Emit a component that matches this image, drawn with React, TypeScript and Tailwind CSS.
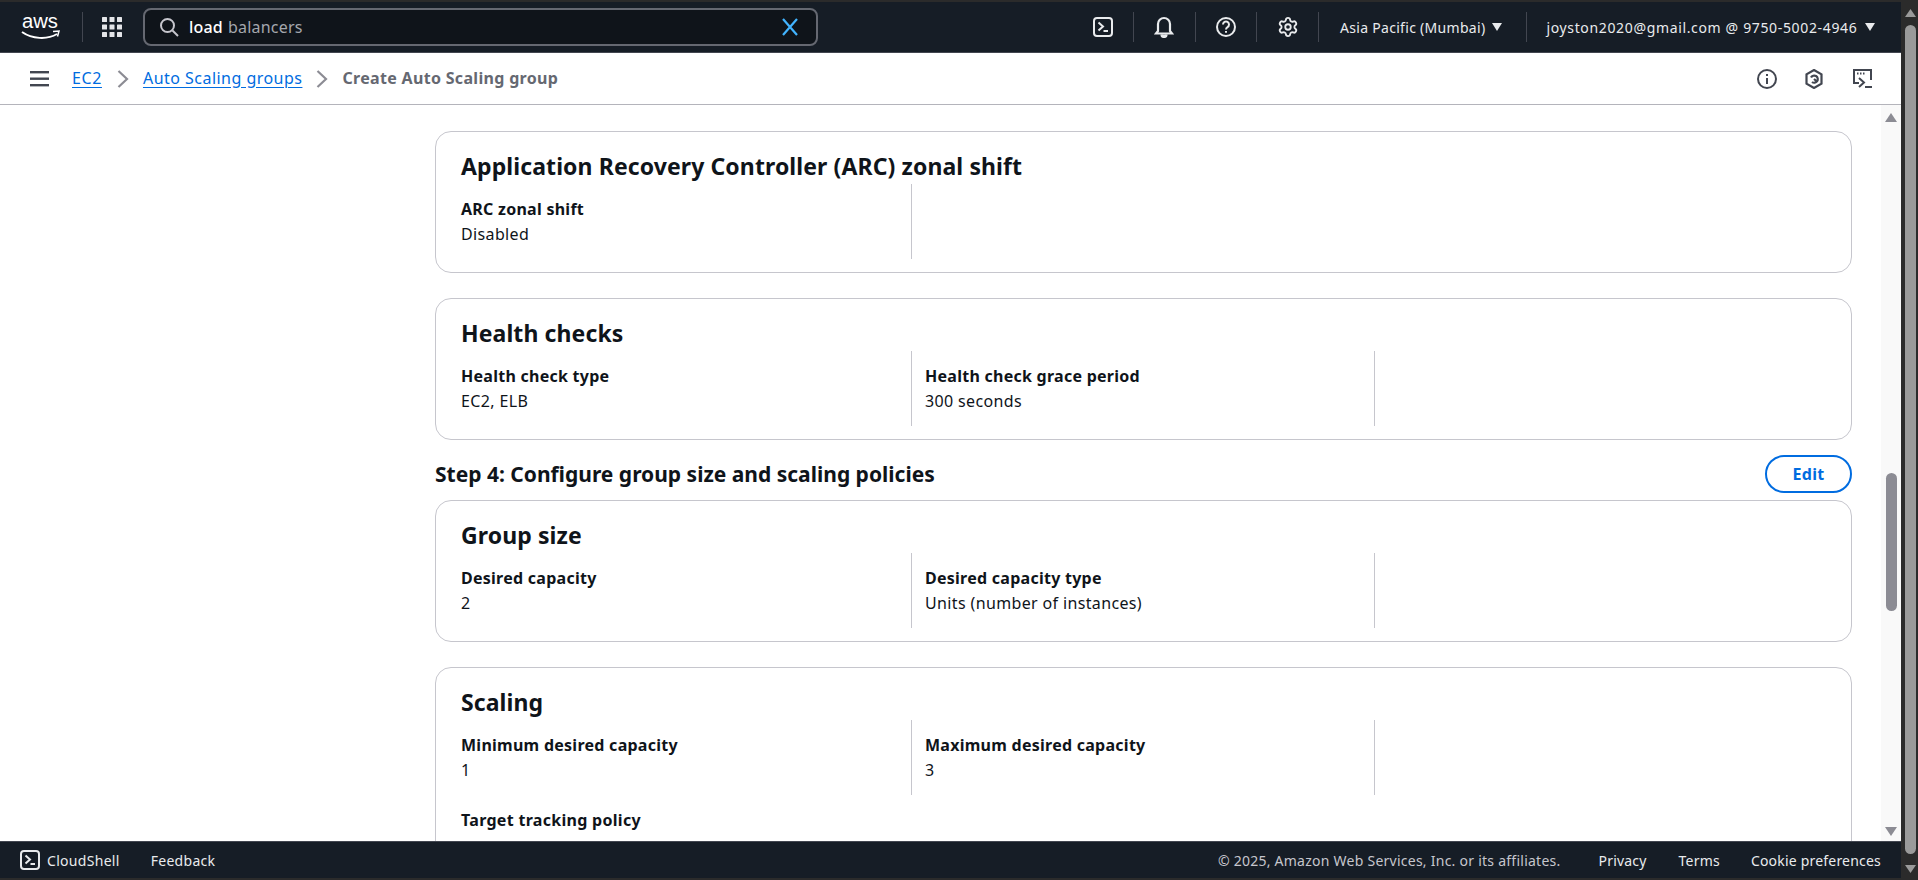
import React from "react";
import { Settings } from "lucide-react";

const font = "font-['Noto_Sans',sans-serif]";

function Field({ label, value, width, divider = true }: { label: string; value: string; width: string; divider?: boolean }) {
  return (
    <div className={`h-[75px] pt-[13px] ${width} ${divider ? "border-r border-[#c6c6cd]" : ""}`}>
      <div className="text-[16px] tracking-[0.26px] leading-[25px] font-bold text-[#0f141a]">{label}</div>
      <div className="text-[16px] tracking-[0.36px] leading-[25px] text-[#0f141a]">{value}</div>
    </div>
  );
}

function FieldGrid({ children }: { children: React.ReactNode }) {
  return <div className="flex">{children}</div>;
}

function Card({ title, className = "", children }: { title: string; className?: string; children: React.ReactNode }) {
  return (
    <section className={`w-[1417px] border border-[#c6c6cd] rounded-[16px] pl-[25px] bg-white ${className}`}>
      <h2 className="text-[23px] tracking-[0.1px] leading-[35px] font-bold text-[#0f141a] pt-[17px] box-content">{title}</h2>
      {children}
    </section>
  );
}

function Caret({ className = "" }: { className?: string }) {
  return (
    <svg width="10" height="8" viewBox="0 0 10 8" className={className}>
      <path d="M0 0h10L5 8z" fill="currentColor" />
    </svg>
  );
}

function Chevron() {
  return (
    <svg width="12" height="18" viewBox="0 0 12 18" fill="none" stroke="#8c8c94" strokeWidth="2.2">
      <path d="M1.5 1l8.5 8-8.5 8" />
    </svg>
  );
}

function ShellIcon({ size = 20 }: { size?: number }) {
  return (
    <svg width={size} height={size} viewBox="0 0 20 20" fill="none" stroke="currentColor" strokeWidth="2">
      <rect x="1" y="1" width="18" height="18" rx="3" />
      <path d="M5.5 5.5L10 9.5l-4.5 4M10.5 14H15" />
    </svg>
  );
}

function NavDivider() {
  return <div className="w-px h-[30px] bg-[#424650]" />;
}

export default function App() {
  return (
    <div className={`w-[1918px] h-[880px] overflow-hidden flex bg-[#2b2b2b] ${font}`}>
      <div className="w-[1901px] h-[880px] flex flex-col">
        <div className="h-[2px] bg-[#2b2b2b] shrink-0" />
        <header className="h-[51px] bg-[#161d26] border-b border-[#424650] flex items-center text-white shrink-0">
          <svg width="40" height="28" viewBox="0 0 40 28" className="ml-[21px] overflow-visible">
            <text x="1" y="15" fontSize="20" fill="#ffffff" fontFamily="Liberation Sans, sans-serif" textLength="36" lengthAdjust="spacingAndGlyphs">aws</text>
            <path d="M1 19c10 7 25 8 35 2" fill="none" stroke="#fff" strokeWidth="2" />
            <path d="M32 18.5l6-.5-1.5 5.5" fill="none" stroke="#fff" strokeWidth="1.5" />
          </svg>
          <div className="w-px h-[30px] bg-[#424650] ml-[21px]" />
          <svg width="20" height="20" viewBox="0 0 20 20" fill="#e4e5e8" className="ml-[19px]">
            {[0, 7.5, 15].map((x) => [0, 7.5, 15].map((y) => <rect key={`${x}-${y}`} x={x} y={y} width="5" height="5" rx="0.5" />))}
          </svg>
          <div className="ml-[21px] w-[675px] h-[38px] rounded-[8px] border-2 border-[#656871] bg-[#0f141a] flex items-center">
            <svg width="20" height="20" viewBox="0 0 20 20" fill="none" stroke="#c6c6cd" strokeWidth="2" className="ml-[14px]">
              <circle cx="8.5" cy="8.5" r="6.5" />
              <path d="M13.5 13.5L19 19" />
            </svg>
            <span className="ml-[10px] text-[16px] tracking-[0.2px] font-medium text-white">load</span>
            <span className="ml-[5px] text-[16px] tracking-[0.2px] text-[#a4a7ad]">balancers</span>
            <svg width="18" height="18" viewBox="0 0 18 18" fill="none" stroke="#42b4ff" strokeWidth="2.2" className="ml-auto mr-[17px]">
              <path d="M2 1l14 16M16 1L2 17" />
            </svg>
          </div>
          <div className="w-[21px] shrink-0" />
          <div className="flex-1 flex items-center">
            <div className="ml-[254px] text-[#e9ebed] flex"><ShellIcon /></div>
            <div className="ml-[20px]"><NavDivider /></div>
            <svg width="20" height="22" viewBox="0 0 20 22" fill="none" stroke="#e9ebed" strokeWidth="2.2" className="ml-[20px]">
              <path d="M4 15V8a6 6 0 0 1 12 0v7l2 2.5H2z" />
              <path d="M7.5 18.5a2.5 2.5 0 0 0 5 0" fill="#e9ebed" />
            </svg>
            <div className="ml-[21px]"><NavDivider /></div>
            <svg width="20" height="20" viewBox="0 0 20 20" fill="none" stroke="#e9ebed" strokeWidth="2" className="ml-[20px]">
              <circle cx="10" cy="10" r="9" />
              <path d="M7 7.5a3 3 0 1 1 4.5 2.6c-1 .6-1.5 1.2-1.5 2.4M10 14v1.8" />
            </svg>
            <div className="ml-[20px]"><NavDivider /></div>
            <Settings size={22} strokeWidth={2} color="#e9ebed" className="ml-[20px] -mx-px" />
            <div className="ml-[20px]"><NavDivider /></div>
            <span className="ml-[21px] text-[14px] tracking-[0.3px] text-[#e9ebed] whitespace-nowrap">Asia Pacific (Mumbai)</span>
            <Caret className="ml-[7px] text-[#e9ebed]" />
            <div className="ml-[24px]"><NavDivider /></div>
            <span className="ml-[19px] text-[14px] tracking-[0.65px] text-[#e9ebed] whitespace-nowrap">joyston2020@gmail.com @ 9750-5002-4946</span>
            <Caret className="ml-[8px] text-[#e9ebed]" />
          </div>
        </header>

        <nav className="h-[52px] bg-white border-b border-[#b4b4bb] flex items-center shrink-0">
          <svg width="20" height="16" viewBox="0 0 20 16" fill="#424650" className="ml-[30px]">
            <rect y="0" width="19" height="2.4" />
            <rect y="6.5" width="19" height="2.4" />
            <rect y="13" width="19" height="2.4" />
          </svg>
          <a className="ml-[22px] -mt-[2px] text-[16px] tracking-[0.6px] text-[#006ce0] underline underline-offset-[3px]">EC2</a>
          <span className="ml-[15px] flex"><Chevron /></span>
          <a className="ml-[14px] -mt-[2px] text-[16px] tracking-[0.47px] text-[#006ce0] underline underline-offset-[3px] whitespace-nowrap">Auto Scaling groups</a>
          <span className="ml-[14px] flex"><Chevron /></span>
          <span className="ml-[14px] -mt-[2px] text-[16px] tracking-[0.32px] font-bold text-[#656871] whitespace-nowrap">Create Auto Scaling group</span>
          <div className="ml-auto flex items-center mr-[27px] text-[#424650]">
            <svg width="20" height="20" viewBox="0 0 20 20" fill="none" stroke="currentColor" strokeWidth="2">
              <circle cx="10" cy="10" r="9" />
              <path d="M10 9v6M10 5v2" />
            </svg>
            <svg width="18" height="20" viewBox="0 0 18 20" fill="none" stroke="currentColor" strokeWidth="2.2" className="ml-[28px]">
              <path d="M9 1l7.5 4.3v9.4L9 19l-7.5-4.3V5.3z" />
              <path d="M6 8.5a3.6 3.6 0 1 1 1 4.5M9 10l3.5 3" />
            </svg>
            <svg width="22" height="22" viewBox="0 0 22 22" fill="none" stroke="currentColor" strokeWidth="2" className="ml-[29px]">
              <path d="M7 15H2V2h17v10" />
              <path d="M5 5.5h1.5M8 5.5h1.5M11 5.5h1.5" />
              <path d="M7 10l5 4.5-5 4.5M13 19h7" />
            </svg>
          </div>
        </nav>

        <div className="flex-1 min-h-0 flex bg-white">
          <main className="w-[1881px] overflow-hidden pl-[435px] pt-[26px]">
            <Card title="Application Recovery Controller (ARC) zonal shift" className="h-[142px]">
              <FieldGrid>
                <Field label="ARC zonal shift" value="Disabled" width="w-[451px]" />
              </FieldGrid>
            </Card>
            <Card title="Health checks" className="h-[142px] mt-[25px]">
              <FieldGrid>
                <Field label="Health check type" value="EC2, ELB" width="w-[451px]" />
                <div className="w-[13px]" />
                <Field label="Health check grace period" value="300 seconds" width="w-[450px]" />
              </FieldGrid>
            </Card>
            <div className="w-[1417px] h-[38px] mt-[15px] flex items-center justify-between">
              <h2 className="text-[21px] font-bold text-[#0f141a] pt-[2px]">Step 4: Configure group size and scaling policies</h2>
              <button className="w-[87px] h-[38px] rounded-full border-2 border-[#006ce0] text-[16px] tracking-[0.3px] font-bold text-[#006ce0]">Edit</button>
            </div>
            <Card title="Group size" className="h-[142px] mt-[7px]">
              <FieldGrid>
                <Field label="Desired capacity" value="2" width="w-[451px]" />
                <div className="w-[13px]" />
                <Field label="Desired capacity type" value="Units (number of instances)" width="w-[450px]" />
              </FieldGrid>
            </Card>
            <Card title="Scaling" className="h-[300px] mt-[25px]">
              <FieldGrid>
                <Field label="Minimum desired capacity" value="1" width="w-[451px]" />
                <div className="w-[13px]" />
                <Field label="Maximum desired capacity" value="3" width="w-[450px]" />
              </FieldGrid>
              <div className="text-[16px] tracking-[0.3px] leading-[25px] font-bold text-[#0f141a] mt-[13px]">Target tracking policy</div>
            </Card>
          </main>
          <aside className="w-[20px] bg-[#f9f9f9] flex flex-col items-center text-[#8c8c94]">
            <svg width="12" height="9" viewBox="0 0 12 9" className="mt-[8px] shrink-0"><path d="M6 0l6 9H0z" fill="currentColor" /></svg>
            <div className="w-[11px] h-[138px] rounded-full bg-[#8c8c94] mt-[351px] shrink-0" />
            <svg width="12" height="9" viewBox="0 0 12 9" className="mt-[216px] shrink-0"><path d="M0 0h12L6 9z" fill="currentColor" /></svg>
          </aside>
        </div>

        <footer className="h-[37px] bg-[#161d26] border-t border-[#424650] flex items-center text-[14px] tracking-[0.2px] text-[#e9ebed] shrink-0">
          <span className="ml-[20px] flex"><ShellIcon /></span>
          <span className="ml-[7px] tracking-[0.3px]">CloudShell</span>
          <span className="ml-[31px] tracking-[0.3px]">Feedback</span>
          <span className="ml-auto tracking-[0.25px] text-[#c6c6cd]">© 2025, Amazon Web Services, Inc. or its affiliates.</span>
          <span className="ml-[38px]">Privacy</span>
          <span className="ml-[32px]">Terms</span>
          <span className="ml-[31px] mr-[20px]">Cookie preferences</span>
        </footer>
        <div className="h-[2px] bg-[#2b2b2b] shrink-0" />
      </div>
      <aside className="w-[17px] h-[880px] flex flex-col pl-[4px] text-[#9a9a9a]">
        <svg width="11" height="8" viewBox="0 0 11 8" className="mt-[9px] shrink-0"><path d="M5.5 0L11 8H0z" fill="currentColor" /></svg>
        <div className="w-[11px] h-[829px] rounded-full bg-[#9a9a9a] mt-[8px] shrink-0" />
        <svg width="11" height="8" viewBox="0 0 11 8" className="mt-[11px] shrink-0"><path d="M0 0h11L5.5 8z" fill="currentColor" /></svg>
      </aside>
    </div>
  );
}
